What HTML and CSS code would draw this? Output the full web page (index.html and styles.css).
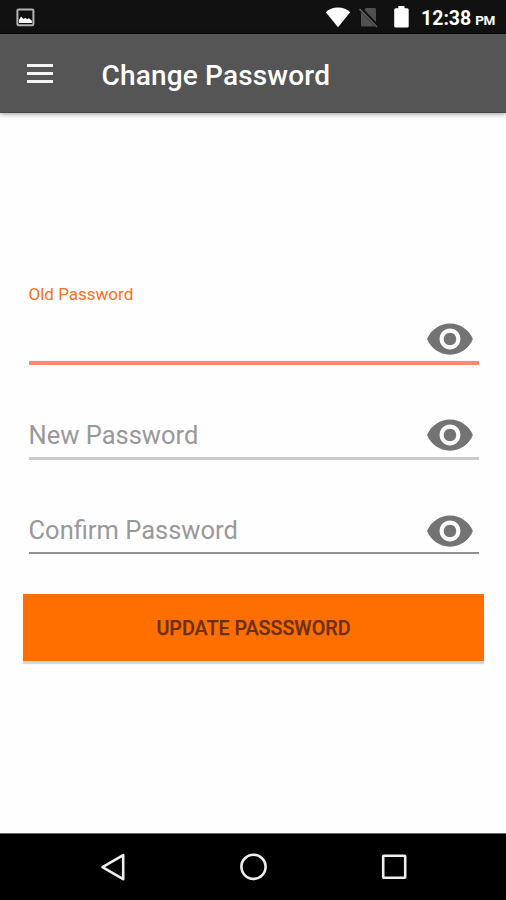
FILE: index.html
```html
<!DOCTYPE html>
<html lang="en">
<head>
<meta charset="utf-8">
<title>Change Password</title>
<link rel="stylesheet" href="styles.css">
</head>
<body>
<svg class="defs" width="0" height="0" aria-hidden="true">
  <symbol id="eye" viewBox="0 0 24 24"><path d="M12 4.5C7 4.5 2.73 7.61 1 12c1.73 4.39 6 7.5 11 7.5s9.27-3.11 11-7.5c-1.73-4.39-6-7.5-11-7.5zM12 17c-2.76 0-5-2.24-5-5s2.24-5 5-5 5 2.24 5 5-2.24 5-5 5zm0-8c-1.66 0-3 1.34-3 3s1.34 3 3 3 3-1.34 3-3-1.34-3-3-3z"/></symbol>
</svg>
<div class="screen">
  <header class="status">
    <svg class="picture" width="19" height="19" viewBox="0 0 19 19"><rect x="1.400" y="1.400" width="16" height="15.800" rx="1.200" fill="none" stroke="#b4b4b4" stroke-width="2"/><path d="M3 15v-3l2-3.500 2.600 2.500 1.700-1.200 1.800 1.400 1.800-1 3 2.500v2.300z" fill="#fff"/></svg>
    <svg class="wifi" width="26" height="21" viewBox="0 0 26 21"><path d="M.8 5.300C3.800 2.200 8 .5 13 .5s9.200 1.700 12.200 4.800L13 20.300z" fill="#fff"/></svg>
    <svg class="sim" width="19" height="21" viewBox="0 0 19 21"><path d="M7 1h8.500q1.500 0 1.500 1.500V19.500H3.500Q2 19.500 2 18V6z" fill="#515151"/><path d="M1.500 1.500L18 19" stroke="#111" stroke-width="4"/><path d="M.5 2L18 20" stroke="#606060" stroke-width="1.600"/></svg>
    <svg class="battery" width="15" height="22" viewBox="0 0 15 22"><path d="M4.300 0h6.200v2.200h2.700q1.500 0 1.500 1.500v16.400q0 1.500-1.500 1.500H1.700Q.2 21.600.2 20.100V3.700q0-1.500 1.500-1.500h2.600z" fill="#fff"/></svg>
    <div class="clock">12:38<span class="meridiem">PM</span></div>
  </header>
  <div class="appbar">
    <div class="menu"><i></i><i></i><i></i></div>
    <h1 class="title">Change Password</h1>
  </div>
  <main class="form">
    <div class="label">Old Password</div>
    <div class="field active"><span class="hint"></span><svg class="eye"><use href="#eye"/></svg></div>
    <div class="field idle"><span class="hint">New Password</span><svg class="eye"><use href="#eye"/></svg></div>
    <div class="field last"><span class="hint">Confirm Password</span><svg class="eye"><use href="#eye"/></svg></div>
    <button class="update" type="button">UPDATE PASSSWORD</button>
  </main>
  <nav class="nav">
    <svg width="28" height="30" viewBox="0 0 28 30"><path d="M24.200 3.200v24L3.500 15.200z"/></svg>
    <svg width="30" height="30" viewBox="0 0 30 30"><circle cx="14.500" cy="14.800" r="12.100"/></svg>
    <svg width="28" height="30" viewBox="0 0 28 30"><rect x="3.200" y="3.700" width="22" height="22" rx=".6"/></svg>
  </nav>
</div>
</body>
</html>
```

FILE: styles.css
```css
* { box-sizing: border-box; }
body { margin: 0; font-family: Roboto, "Liberation Sans", sans-serif; background: #fefefe; }
.defs { display: block; }
.screen { width: 506px; height: 900px; display: flex; flex-direction: column; overflow: hidden; background: #fefefe; }
svg { display: block; flex: none; }

.status { height: 34px; flex: none; display: flex; align-items: flex-start; padding: 6px 0 0 16px; background: #111; border-bottom: 1px solid #080808; color: #fff; }
.picture { margin-top: 2px; }
.wifi { margin-left: 290px; margin-top: 1px; }
.sim { margin-left: 8px; margin-top: 1px; }
.battery { margin-left: 16px; }
.clock { margin-left: 12px; font-size: 19.5px; line-height: 26px; font-weight: 700; white-space: nowrap; }
.meridiem { font-size: 13.5px; margin-left: 4px; letter-spacing: -.4px; }

.appbar { height: 79px; flex: none; display: flex; align-items: flex-start; padding-left: 26.5px; background: #555; border-bottom: 1px solid #464646; box-shadow: 0 1px 5px rgba(0, 0, 0, .4); }
.menu { width: 26.5px; margin-top: 30px; display: flex; flex-direction: column; gap: 5px; }
.menu i { height: 3px; background: #f4f4f4; }
.title { margin: 26px 0 0 48.5px; font-size: 28px; line-height: 32px; letter-spacing: .17px; font-weight: 500; color: #fff; white-space: nowrap; }

.form { flex: 1; padding: 171px 22px 0 23px; }
.label { margin-left: 5.5px; height: 20px; font-size: 17px; line-height: 20px; color: #ff7014; }
.field { margin: 0 5px 0 5.5px; display: flex; justify-content: space-between; align-items: flex-start; }
.field.active { height: 61px; padding-top: 10px; border-bottom: 4px solid #fb8a66; }
.field.idle { height: 95px; padding-top: 45px; border-bottom: 3px solid #cacaca; }
.field.last { height: 94px; padding-top: 46px; border-bottom: 2px solid #909090; }
.field.last .hint { margin-top: 9px; }
.hint { font-size: 25.5px; line-height: 30px; margin-top: 10px; color: #999; white-space: nowrap; }
.eye { width: 50px; height: 50px; margin-right: 4px; fill: #737373; }
.update { display: block; width: 461px; height: 67px; margin: 40px 0 0; padding: 0; border: 0; background: #ff6f00; color: #6b3010; font: 500 19.7px/69px Roboto, "Liberation Sans", sans-serif; -webkit-text-stroke: .25px #6b3010; box-shadow: 0 3px 1px #d3d8d6; }

.nav { height: 67px; flex: none; display: flex; justify-content: space-between; padding: 18px 98px 0 99px; background: #000; border-top: 1px solid #666; }
.nav svg { fill: none; stroke: #eee; stroke-width: 2.600; stroke-linejoin: round; }
```
